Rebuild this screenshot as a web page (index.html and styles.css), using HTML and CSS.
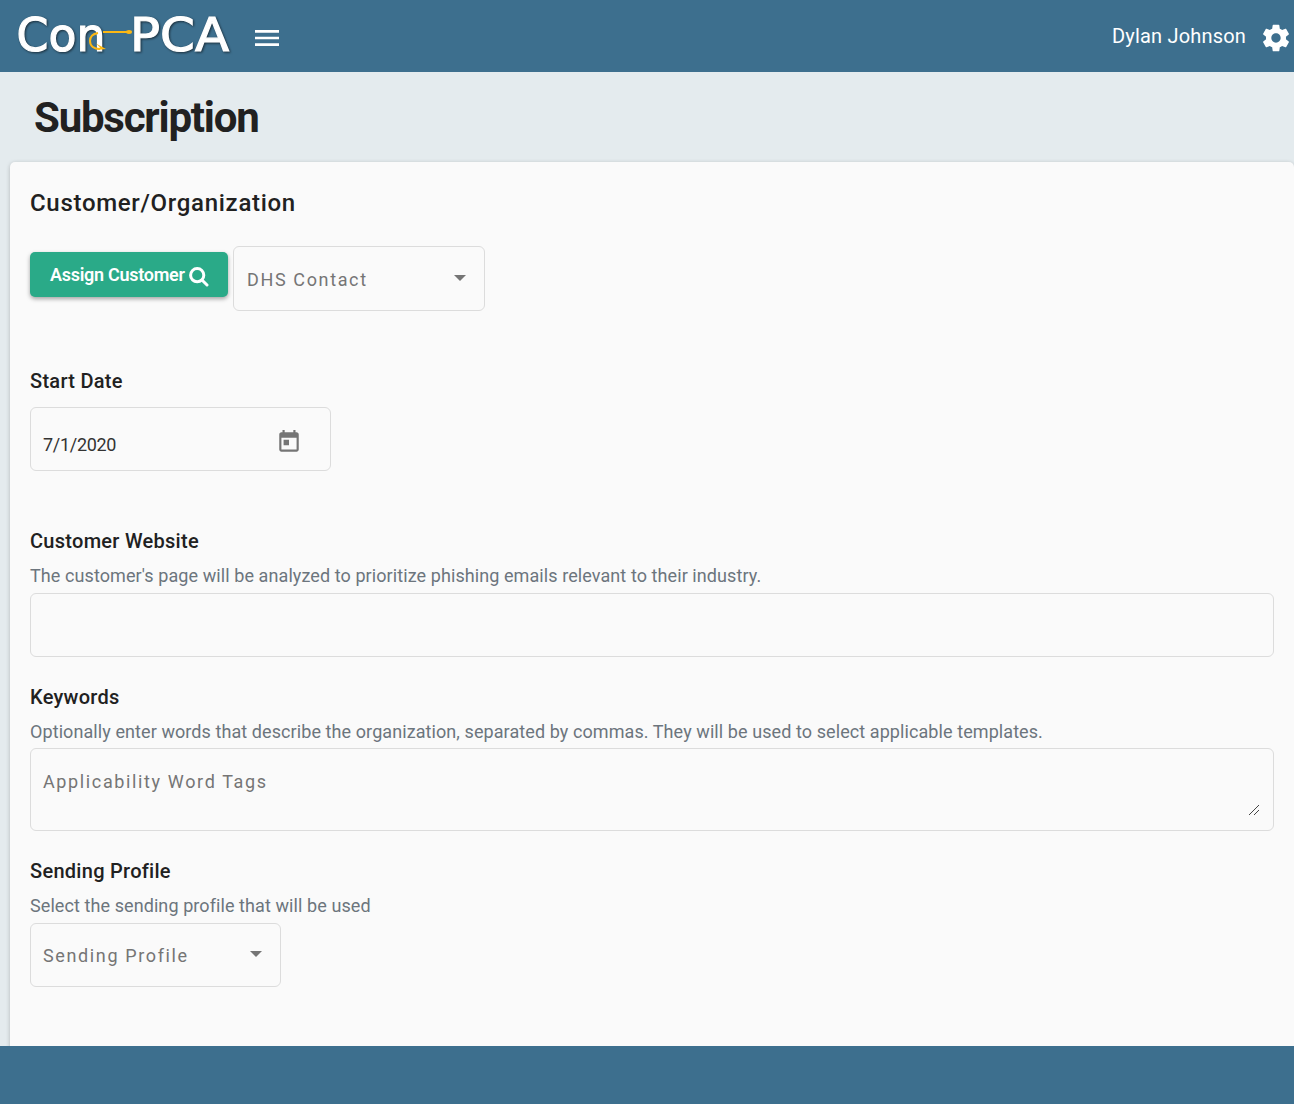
FILE: index.html
```html
<!DOCTYPE html>
<html lang="en">
<head>
<meta charset="utf-8">
<title>Con-PCA</title>
<link rel="stylesheet" href="styles.css">
</head>
<body>
<header class="toolbar">
  <svg class="logo" width="220" height="56" viewBox="0 0 220 56">
    <g class="logo-text">
      <text x="2.5" y="42.5" textLength="89" lengthAdjust="spacingAndGlyphs">Con</text>
      <text x="116" y="42.5" textLength="99" lengthAdjust="spacingAndGlyphs">PCA</text>
    </g>
    <path class="hook" d="M117 24H89M84 25C78 26 76 29 76 33C76 38 80 41 86 41"/>
    <path class="hook-tip" d="M82 35.5L92 41L83 42L86 39.5ZM112 24a3 1.9 0 1 0 6 0a3 1.9 0 1 0-6 0"/>
  </svg>
  <svg class="menu" width="32" height="32" viewBox="0 0 24 24"><path d="M3 18h18v-2H3v2zm0-5h18v-2H3v2zm0-7v2h18V6H3z"/></svg>
  <span class="user">Dylan Johnson</span>
  <svg class="gear" width="32" height="32" viewBox="0 0 24 24"><path d="M19.43 12.98c.04-.32.07-.64.07-.98s-.03-.66-.07-.98l2.11-1.65c.19-.15.24-.42.12-.64l-2-3.46c-.12-.22-.39-.3-.61-.22l-2.49 1c-.52-.4-1.08-.73-1.69-.98l-.38-2.65C14.46 2.18 14.25 2 14 2h-4c-.25 0-.46.18-.49.42l-.38 2.65c-.61.25-1.17.59-1.69.98l-2.49-1c-.23-.09-.49 0-.61.22l-2 3.46c-.13.22-.07.49.12.64l2.11 1.65c-.04.32-.07.65-.07.98s.03.66.07.98l-2.11 1.65c-.19.15-.24.42-.12.64l2 3.46c.12.22.39.3.61.22l2.49-1c.52.4 1.08.73 1.69.98l.38 2.65c.03.24.24.42.49.42h4c.25 0 .46-.18.49-.42l.38-2.65c.61-.25 1.17-.59 1.69-.98l2.49 1c.23.09.49 0 .61-.22l2-3.46c.12-.22.07-.49-.12-.64l-2.11-1.65zM12 15.5c-1.93 0-3.5-1.57-3.5-3.5s1.57-3.5 3.5-3.5 3.5 1.57 3.5 3.5-1.57 3.5-3.5 3.5z"/></svg>
</header>
<main class="content">
  <h1>Subscription</h1>
  <section class="card">
    <h2>Customer/Organization</h2>
    <div class="row">
      <button class="assign">Assign Customer<svg width="20" height="20" viewBox="0 0 20 20"><circle cx="8.2" cy="8.2" r="6.6"/><path d="M13 13l5 5"/></svg></button>
      <div class="field select"><span class="placeholder">DHS Contact</span><i class="arrow"></i></div>
    </div>
    <h3 class="start">Start Date</h3>
    <div class="field date"><span class="value">7/1/2020</span><svg width="26" height="26" viewBox="0 0 24 24"><path d="M19 3h-1V1h-2v2H8V1H6v2H5c-1.11 0-1.99.9-1.99 2L3 19c0 1.1.89 2 2 2h14c1.1 0 2-.9 2-2V5c0-1.1-.9-2-2-2zm0 16H5V8h14v11zM7 10h5v5H7z"/></svg></div>
    <h3 class="website">Customer Website</h3>
    <p>The customer's page will be analyzed to prioritize phishing emails relevant to their industry.</p>
    <div class="field wide"></div>
    <h3 class="keywords">Keywords</h3>
    <p class="keywords-hint">Optionally enter words that describe the organization, separated by commas. They will be used to select applicable templates.</p>
    <div class="field area"><span class="placeholder">Applicability Word Tags</span><svg class="grip" width="12" height="12" viewBox="0 0 12 12"><path d="M1 11L11 1M6 11l5-5"/></svg></div>
    <h3 class="sending">Sending Profile</h3>
    <p>Select the sending profile that will be used</p>
    <div class="field select profile"><span class="placeholder">Sending Profile</span><i class="arrow"></i></div>
  </section>
</main>
<footer class="footer"></footer>
</body>
</html>
```
FILE: styles.css
```css
* { box-sizing: border-box; }
body { margin: 0; height: 1104px; display: flex; flex-direction: column; overflow: hidden; background: #e4ebee; font-family: Roboto, sans-serif; color: #212121; }
h1, h2, h3, p { margin: 0; }

.toolbar { height: 72px; flex: none; display: flex; align-items: center; background: #3d6f8e; color: #fff; padding: 4px 2px 0 14px; }
.logo { flex: none; margin-top: -4px; overflow: visible; }
.logo-text { font: 400 47px "DejaVu Sans", sans-serif; fill: #fff; stroke: #fff; stroke-width: 1.2; filter: drop-shadow(1px 1px 1px #1b2f3c); }
.hook { fill: none; stroke: #fdb813; stroke-width: 2; }
.hook-tip { fill: #fdb813; }
.menu { fill: #fff; margin-left: 17px; }
.user { margin-left: auto; font-size: 20px; line-height: 24px; margin-top: -4px; letter-spacing: .18px; }
.gear { fill: #fff; margin-left: 14px; }

.content { flex: 1; min-height: 0; overflow: hidden; padding-left: 10px; }
h1 { height: 90px; padding: 21px 0 0 24px; font-size: 42px; line-height: 50px; font-weight: 700; letter-spacing: -1.22px; }
.card { height: 1000px; padding: 25px 20px; background: #fafafa; border-radius: 5px; box-shadow: 0 1px 4px rgba(0,0,0,.22); }
h2 { font-size: 24px; line-height: 32px; font-weight: 500; letter-spacing: .7px; }
h3 { font-size: 20px; line-height: 24px; font-weight: 500; letter-spacing: .28px; }
p { font-size: 18px; line-height: 24px; margin: 11px 0 5px; color: #6c757d; letter-spacing: .083px; }

.row { display: flex; gap: 5px; margin-top: 27px; }
.assign { width: 198px; height: 45px; margin-top: 6px; padding: 0 19px 0 20px; display: flex; align-items: center; justify-content: space-between; border: 0; border-radius: 5px; background: #2aaa88; color: #fff; font: 600 18px Roboto, sans-serif; letter-spacing: -.28px; box-shadow: 0 2px 4px rgba(0,0,0,.35); white-space: nowrap; }
.assign svg { fill: none; stroke: #fff; stroke-width: 3; stroke-linecap: round; margin-top: 4px; }

.field { height: 64px; display: flex; align-items: center; border: 1px solid #dcdcdc; border-radius: 6px; padding: 0 12px; font-size: 18px; line-height: 20px; }
.select { width: 251px; justify-content: space-between; padding-right: 18px; }
.row .select { width: 252px; height: 65px; padding-left: 13px; }
.placeholder { color: #757575; letter-spacing: 1.63px; margin-top: 3px; }
.profile .placeholder { margin-top: 1px; }
.arrow { border: 6px solid transparent; border-top-color: #757575; border-bottom: 0; margin-top: -2px; }
.start { margin-top: 58px; }
.date { width: 301px; margin-top: 14px; padding-right: 28px; justify-content: space-between; }
.value { margin-top: 11px; letter-spacing: -.3px; color: #333; }
.date svg { fill: #757575; margin-top: 6px; }
.website { margin-top: 58px; }
.keywords { margin-top: 28px; }
.keywords-hint { margin-bottom: 4px; }
.area { height: 83px; align-items: flex-start; justify-content: space-between; padding-top: 20px; }
.grip { fill: none; stroke: #444; align-self: flex-end; margin: 0 1px 14px 0; }
.sending { margin-top: 28px; }

.footer { height: 58px; flex: none; background: #3d6f8e; }
```
